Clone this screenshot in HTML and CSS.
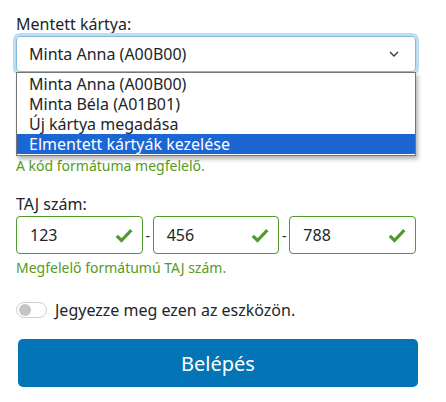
FILE: index.html
```html
<!DOCTYPE html>
<html lang="hu">

<head>
    <meta charset="UTF-8">
    <meta name="viewport" content="width=device-width, initial-scale=1.0">
    <title>Belépés</title>

    <link rel="stylesheet" href="styles.css">
</head>

<body>
    <form class="login">
        <div class="field">
            <label class="field-label" for="card">Mentett kártya:</label>
            <div class="select-wrap">
                <div class="select" id="card">
                    <span>Minta Anna (A00B00)</span>
                    <svg class="chevron" width="10" height="6" viewBox="0 0 10 6">
                        <path d="M1 1l4 4 4-4" fill="none" stroke="#343a40" stroke-width="1.4" />
                    </svg>
                </div>
                <ul class="options">
                    <li>Minta Anna (A00B00)</li>
                    <li>Minta Béla (A01B01)</li>
                    <li>Új kártya megadása</li>
                    <li class="active">Elmentett kártyák kezelése</li>
                </ul>
            </div>
            <div class="code-field"></div>
            <div class="valid-text">A kód formátuma megfelelő.</div>
        </div>

        <div class="field">
            <label class="field-label">TAJ szám:</label>
            <div class="taj-row">
                <div class="taj-input">
                    <span>123</span>
                    <svg class="check" width="18" height="15" viewBox="0 0 18 15">
                        <path d="M1.8 7.8l4.7 4.7 9.8-10.3" fill="none" stroke="#4f9a2c" stroke-width="3.2" />
                    </svg>
                </div>
                <span class="dash">-</span>
                <div class="taj-input">
                    <span>456</span>
                    <svg class="check" width="18" height="15" viewBox="0 0 18 15">
                        <path d="M1.8 7.8l4.7 4.7 9.8-10.3" fill="none" stroke="#4f9a2c" stroke-width="3.2" />
                    </svg>
                </div>
                <span class="dash">-</span>
                <div class="taj-input">
                    <span>788</span>
                    <svg class="check" width="18" height="15" viewBox="0 0 18 15">
                        <path d="M1.8 7.8l4.7 4.7 9.8-10.3" fill="none" stroke="#4f9a2c" stroke-width="3.2" />
                    </svg>
                </div>
            </div>
            <div class="valid-text">Megfelelő formátumú TAJ szám.</div>
        </div>

        <label class="remember">
            <span class="switch"><span class="knob"></span></span>
            Jegyezze meg ezen az eszközön.
        </label>

        <button type="submit">Belépés</button>
    </form>
</body>

</html>
```

FILE: styles.css
```css
body {
    margin: 0;
    font-family: "Noto Sans", "Open Sans", sans-serif;
    color: #212529;
    background: #fff;
}

.login {
    width: 400px;
    margin-left: 16px;
    padding-top: 12px;
}

.field-label {
    display: block;
    font-size: 16px;
    line-height: 24px;
}

.select-wrap {
    position: relative;
}

.select {
    height: 36px;
    box-sizing: border-box;
    border: 1px solid #83b9db;
    border-radius: 4px;
    box-shadow: 0 0 0 3px #bcdcef;
    padding: 0 16px 0 12px;
    display: flex;
    align-items: center;
    justify-content: space-between;
    font-size: 16px;
}

.options {
    position: absolute;
    top: 100%;
    left: 0;
    right: 0;
    margin: 0;
    padding: 1px 0;
    list-style: none;
    background: #fff;
    border: 1px solid #767676;
    box-shadow: 2px 3px 4px rgba(0, 0, 0, 0.3);
    font-size: 16px;
    line-height: 20px;
    z-index: 2;
}

.options li {
    padding-left: 12px;
}

.options li.active {
    background: #1c66d3;
    color: #fff;
}

.code-field {
    height: 84px;
}

.valid-text {
    color: #559a22;
    font-size: 14px;
    line-height: 20px;
}

.field + .field {
    margin-top: 16px;
}

.taj-row {
    display: flex;
    align-items: center;
    margin-bottom: 4px;
}

.taj-input {
    flex: 1;
    height: 38px;
    box-sizing: border-box;
    border: 1px solid #4f9a2c;
    border-radius: 4px;
    padding: 0 9px 0 13px;
    display: flex;
    align-items: center;
    justify-content: space-between;
    font-size: 16px;
}

.dash {
    width: 10px;
    text-align: center;
    font-size: 14px;
}

.remember {
    display: flex;
    align-items: center;
    gap: 8px;
    margin-top: 20px;
    font-size: 16px;
    line-height: 24px;
}

.switch {
    width: 31px;
    height: 16px;
    box-sizing: border-box;
    border: 1px solid #cfcfcf;
    border-radius: 8px;
    display: flex;
    align-items: center;
    padding-left: 2px;
}

.knob {
    width: 12px;
    height: 12px;
    border-radius: 50%;
    background: #c4c4c4;
}

button {
    display: block;
    width: 400px;
    height: 48px;
    margin: 17px 0 0 2px;
    border: none;
    border-radius: 5px;
    background: #0374b5;
    color: #fff;
    font-family: inherit;
    font-size: 20px;
    cursor: pointer;
}
```
